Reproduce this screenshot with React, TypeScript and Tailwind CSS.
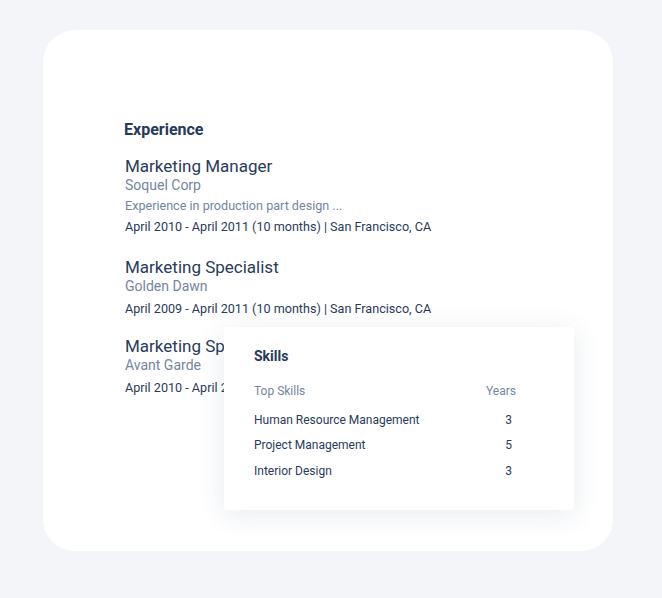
const jobs = [
  {
    title: "Marketing Manager",
    company: "Soquel Corp",
    desc: "Experience in production part design ...",
    dates: "April 2010 - April 2011 (10 months) | San Francisco, CA",
    mt: "mt-[16px]",
  },
  {
    title: "Marketing Specialist",
    company: "Golden Dawn",
    dates: "April 2009 - April 2011 (10 months) | San Francisco, CA",
    mt: "mt-[20px]",
  },
  {
    title: "Marketing Specialist",
    company: "Avant Garde",
    dates: "April 2010 - April 2011 (10 months) | San Francisco, CA",
    mt: "mt-[17px]",
  },
];

const skills = [
  { name: "Human Resource Management", years: 3 },
  { name: "Project Management", years: 5 },
  { name: "Interior Design", years: 3 },
];

export default function App() {
  return (
    <div className="w-[662px] h-[598px] bg-[#f3f5f9] pt-[30px] pl-[43px] font-['Roboto',sans-serif]">
      <div className="relative w-[570px] h-[521px] bg-white rounded-[32px] pt-[90px] pl-[82px]">
        <h2 className="-ml-[1px] text-[16px] leading-[20px] font-bold text-[#26395a]">Experience</h2>

        {jobs.map((job, i) => (
          <div key={i} className={job.mt}>
            <div className="text-[17px] leading-[20px] text-[#2a3b5a]">{job.title}</div>
            <div className="text-[14px] leading-[18px] text-[#7485a3]">{job.company}</div>
            {job.desc && (
              <div className="mt-[2px] text-[12.6px] leading-[20px] text-[#7485a3]">{job.desc}</div>
            )}
            <div className={`${job.desc ? "mt-[1px]" : "mt-[4px]"} text-[12.6px] leading-[20px] text-[#2a3b5a]`}>
              {job.dates}
            </div>
          </div>
        ))}

        <div className="absolute left-[181px] top-[297px] w-[350px] h-[183px] bg-white rounded-[3px] shadow-[0_4px_28px_rgba(40,60,100,0.11)] pt-[20px] pl-[30px] pr-[58px]">
          <div className="text-[14px] leading-[18px] font-bold text-[#26395a]">Skills</div>
          <div className="mt-[18px] flex justify-between text-[12px] leading-[16px] text-[#7485a3]">
            <span>Top Skills</span>
            <span>Years</span>
          </div>
          <div className="mt-[8px] flex flex-col">
            {skills.map((s) => (
              <div key={s.name} className="flex justify-between h-[25.5px] items-center text-[12px] text-[#2a3b5a]">
                <span>{s.name}</span>
                <span className="pr-[4px]">{s.years}</span>
              </div>
            ))}
          </div>
        </div>
      </div>
    </div>
  );
}
